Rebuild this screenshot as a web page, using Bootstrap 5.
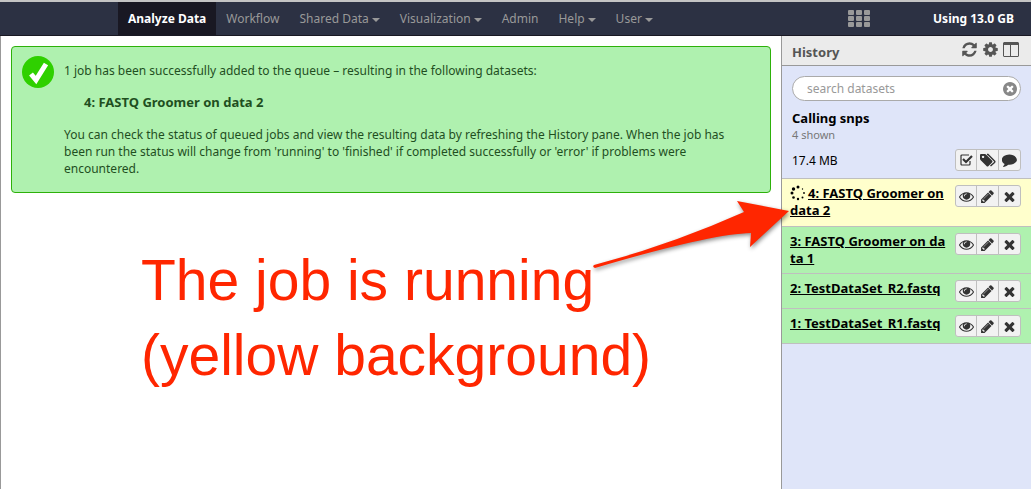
<!DOCTYPE html>
<html lang="en">
<head>
<meta charset="utf-8">
<meta name="viewport" content="width=device-width, initial-scale=1">
<title>Galaxy</title>
<link href="https://cdn.jsdelivr.net/npm/bootstrap@5.3.0/dist/css/bootstrap.min.css" rel="stylesheet">
<style>
body { font-family: "Noto Sans", "Open Sans", sans-serif; font-size: 12px; line-height: 17px; color: #000; background: #fff; }
.masthead { background: #2c3143; border-top: 2px solid #c4c4c4; border-bottom: 1px solid #191823; height: 36px; }
.masthead .nav-link { padding: 0 10px; line-height: 33px; color: #999; font-size: 12px; }
.masthead .nav-link.active { background: #191823; color: #fff; font-weight: 700; }
.masthead .dropdown-toggle::after { border-top: 4px solid; border-right: 4px solid transparent; border-left: 4px solid transparent; margin-left: 3px; vertical-align: 1px; }
.main-menu { margin-left: 118px; }
.apps-btn { margin-right: 63px; }
.quota { margin-right: 17px; color: #fff; }
.shell { min-height: calc(100vh - 36px); }
.center-pane { border-left: 1px solid #999; padding: 10px; min-width: 0; }
.done-box { background: #aff1af; border: 1px solid #2db10a; border-radius: 4px; color: #1f4f1f; padding: 9px 19px 15px 10px; gap: 10px; }
.done-box p { margin: 0 0 15px; }
.done-text { padding-top: 6px; }
.done-text .out-name { margin-left: 20px; font-weight: 700; font-size: 13px; }
.callout-text { font-family: "Liberation Sans", Arial, sans-serif; font-size: 57px; line-height: 75px; color: #ff2600; margin: 50px 0 0 130px; }
.history-pane { width: 250px; background: #dfe5f9; border-left: 1px solid #999; }
.pane-head { background: #ebebeb; border-bottom: 1px solid #999; height: 30px; padding: 0 12px 2px 10px; color: #444; }
.pane-head h1 { font-size: 13px; font-weight: 700; color: #555; margin: 6px 0 0; }
.icon-link-btn { color: #555; }
.search-wrap { height: 25px; background: #fff; border: 1px solid #aaa; border-radius: 13px; padding: 0 3px 0 14px; }
.search-wrap input { font-size: 12px; min-width: 0; color: #000; outline: 0; }
.search-wrap input::placeholder { color: #999; opacity: 1; }
.search-wrap button { color: #888; }
.history-info { padding: 10px 10px 7px; }
.history-info h2 { font-size: 13px; line-height: 17px; font-weight: 700; margin: 9px 0 0; }
.shown { color: #777; font-size: 11px; line-height: 16px; }
.size-row { margin-top: 6px; }
.tool-group .btn { width: 22px; height: 22px; padding: 0; border: 1px solid #bfbfbf; background: #f2f2f2; color: #333; border-radius: 3px; display: flex; align-items: center; justify-content: center; flex: none; }
.tool-group .btn + .btn { width: 23px; }
.dataset { border-top: 1px solid #bfbfbf; background: #aff1af; padding: 6px 10px 5px 8px; min-height: 35px; }
.dataset a { color: #000; font-weight: 700; font-size: 13px; text-decoration: underline; }
.dataset-list { border-bottom: 1px solid #bfbfbf; }
.dataset.tall { min-height: 47px; }
.dataset.running { background: #ffffcc; min-height: 48px; }
.pointer-arrow { left: -192px; top: 163px; pointer-events: none; filter: drop-shadow(1px 2px 2px rgba(0,0,0,.45)); }
svg { display: block; fill: currentColor; }
.spin { display: inline-block; vertical-align: -3px; margin-right: 2px; }
</style>
</head>
<body>
<svg width="0" height="0" class="position-absolute" aria-hidden="true">
<symbol id="eye" viewBox="0 0 1792 1792"><path d="M1664 960q-152-236-381-353 61 104 61 225 0 185-131.500 316.500t-316.500 131.500-316.500-131.500-131.500-316.500q0-121 61-225-229 117-381 353 133 205 333.500 326.500t434.500 121.500 434.500-121.500 333.500-326.500zM944 576q0-20-14-34t-34-14q-125 0-214.500 89.500t-89.500 214.500q0 20 14 34t34 14 34-14 14-34q0-86 61-147t147-61q20 0 34-14t14-34zM1792 960q0 34-20 69-140 230-376.500 368.500t-499.500 138.500-499.500-139-376.500-368q-20-35-20-69t20-69q140-229 376.500-368t499.500-139 499.500 139 376.500 368q20 35 20 69z"/></symbol>
<symbol id="pencil" viewBox="0 0 1792 1792"><path d="M491 1536l91-91-235-235-91 91v107h128v128h107zM1014 608q0-22-22-22-10 0-17 7l-542 542q-7 7-7 17 0 22 22 22 10 0 17-7l542-542q7-7 7-17zM960 416l416 416-832 832h-416v-416zM1643 512q0 53-37 90l-166 166-416-416 166-165q36-38 90-38 53 0 91 38l235 234q37 39 37 91z"/></symbol>
<symbol id="times" viewBox="0 0 1792 1792"><path d="M1490 1322q0 40-28 68l-136 136q-28 28-68 28t-68-28l-294-294-294 294q-28 28-68 28t-68-28l-136-136q-28-28-28-68t28-68l294-294-294-294q-28-28-28-68t28-68l136-136q28-28 68-28t68 28l294 294 294-294q28-28 68-28t68 28l136 136q28 28 28 68t-28 68l-294 294 294 294q28 28 28 68z"/></symbol>
</svg>

<header class="masthead d-flex align-items-center">
  <nav class="nav main-menu flex-nowrap text-nowrap" aria-label="Main">
    <a class="nav-link active" href="#">Analyze Data</a>
    <a class="nav-link" href="#">Workflow</a>
    <a class="nav-link dropdown-toggle" href="#">Shared Data</a>
    <a class="nav-link dropdown-toggle" href="#">Visualization</a>
    <a class="nav-link" href="#">Admin</a>
    <a class="nav-link dropdown-toggle" href="#">Help</a>
    <a class="nav-link dropdown-toggle" href="#">User</a>
  </nav>
  <button class="apps-btn btn p-0 border-0 ms-auto text-secondary" aria-label="Applications">
    <svg width="22" height="17" viewBox="0 0 22 17"><g fill="#999"><rect width="6" height="5" rx="1"/><rect x="8" width="6" height="5" rx="1"/><rect x="16" width="6" height="5" rx="1"/><rect y="6" width="6" height="5" rx="1"/><rect x="8" y="6" width="6" height="5" rx="1"/><rect x="16" y="6" width="6" height="5" rx="1"/><rect y="12" width="6" height="5" rx="1"/><rect x="8" y="12" width="6" height="5" rx="1"/><rect x="16" y="12" width="6" height="5" rx="1"/></g></svg>
  </button>
  <strong class="quota text-nowrap">Using 13.0 GB</strong>
</header>

<div class="shell d-flex">
  <main class="center-pane flex-grow-1">
    <div class="done-box d-flex align-items-start" role="status">
      <svg class="flex-shrink-0" width="32" height="32" viewBox="0 0 32 32"><circle cx="16" cy="16" r="16" fill="#2fd000"/><path d="M9 18l5 6L24 8" fill="none" stroke="#fff" stroke-width="5"/></svg>
      <div class="done-text">
        <p>1 job has been successfully added to the queue – resulting in the following datasets:</p>
        <p class="out-name">4: FASTQ Groomer on data 2</p>
        <p class="mb-0">You can check the status of queued jobs and view the resulting data by refreshing the History pane. When the job has been run the status will change from 'running' to 'finished' if completed successfully or 'error' if problems were encountered.</p>
      </div>
    </div>
    <p class="callout-text">The job is running<br>(yellow background)</p>
  </main>

  <aside class="history-pane flex-shrink-0 position-relative">
    <div class="pane-head d-flex align-items-center justify-content-between">
      <h1>History</h1>
      <div class="d-flex gap-1 align-items-center">
        <button class="icon-link-btn btn p-0 border-0" aria-label="Refresh"><svg width="17" height="17" viewBox="0 0 1792 1792"><path d="M1639 1056q0 5-1 7-64 268-268 434.500t-478 166.500q-146 0-282.500-55t-243.500-157l-129 129q-19 19-45 19t-45-19-19-45v-448q0-26 19-45t45-19h448q26 0 45 19t19 45-19 45l-137 137q71 66 161 102t187 36q134 0 250-65t186-179q11-17 53-117 8-23 30-23h192q13 0 22.500 9.500t9.500 22.500zM1664 256v448q0 26-19 45t-45 19h-448q-26 0-45-19t-19-45 19-45l138-138q-148-137-349-137-134 0-250 65t-186 179q-11 17-53 117-8 23-30 23h-199q-13 0-22.500-9.500t-9.500-22.500v-7q65-268 270-434.500t480-166.500q146 0 284 55.500t245 156.500l130-129q19-19 45-19t45 19 19 45z"/></svg></button>
        <button class="icon-link-btn btn p-0 border-0" aria-label="History options"><svg width="17" height="17" viewBox="0 0 1792 1792"><path d="M1152 896q0-106-75-181t-181-75-181 75-75 181 75 181 181 75 181-75 75-181zM1664 787v222q0 12-8 23t-20 13l-185 28q-19 54-39 91 35 50 107 138 10 12 10 25t-9 23q-27 37-99 108t-94 71q-12 0-26-9l-138-108q-44 23-91 38-16 136-29 186-7 28-36 28h-222q-14 0-24.500-8.500t-11.500-21.500l-28-184q-49-16-90-37l-141 107q-10 9-25 9-14 0-25-11-126-114-165-168-7-10-7-23 0-12 8-23 15-21 51-66.500t54-70.500q-27-50-41-99l-183-27q-13-2-21-12.500t-8-23.500v-222q0-12 8-23t19-13l186-28q14-46 39-92-40-57-107-138-10-12-10-24 0-10 9-23 26-36 98.500-107.500t94.500-71.500q13 0 26 10l138 107q44-23 91-38 16-136 29-186 7-28 36-28h222q14 0 24.500 8.500t11.500 21.500l28 184q49 16 90 37l142-107q9-9 24-9 13 0 25 10 129 119 165 170 7 8 7 22 0 12-8 23-15 21-51 66.500t-54 70.500q26 50 41 98l183 28q13 2 21 12.500t8 23.500z"/></svg></button>
        <button class="icon-link-btn btn p-0 border-0" aria-label="View all histories"><svg width="16" height="15" viewBox="0 0 16 15"><path fill-rule="evenodd" d="M1 0h14l1 1v13l-1 1H1l-1-1V1zM1 3v11h6V3zm7 0v11h7V3z"/></svg></button>
      </div>
    </div>

    <div class="history-info">
      <div class="search-wrap d-flex align-items-center">
        <input class="border-0 bg-transparent p-0 flex-grow-1" type="text" placeholder="search datasets" aria-label="search datasets">
        <button class="btn p-0 border-0" aria-label="Clear search"><svg width="14" height="14" viewBox="128 128 1536 1536"><path d="M1277 1122q0-26-19-45l-181-181 181-181q19-19 19-45 0-27-19-46l-90-90q-19-19-46-19-26 0-45 19l-181 181-181-181q-19-19-45-19-27 0-46 19l-90 90q-19 19-19 46 0 26 19 45l181 181-181 181q-19 19-19 45 0 27 19 46l90 90q19 19 46 19 26 0 45-19l181-181 181 181q19 19 45 19 27 0 46-19l90-90q19-19 19-46zM1664 896q0 209-103 385.500t-279.500 279.500-385.500 103-385.500-103-279.500-279.500-103-385.500 103-385.500 279.500-279.500 385.500-103 385.500 103 279.500 279.500 103 385.500z"/></svg></button>
      </div>
      <h2>Calling snps</h2>
      <div class="shown">4 shown</div>
      <div class="size-row d-flex justify-content-between align-items-center">
        <span>17.4 MB</span>
        <div class="btn-group tool-group">
          <button class="btn" aria-label="Select datasets"><svg width="14" height="14" viewBox="0 0 14 14"><path d="M11 8v3q0 1-1 1H3q-1 0-1-1V3q0-1 1-1h7" fill="none" stroke="currentColor" stroke-width="1.200"/><path d="M4 6l3 3 6-6" fill="none" stroke="currentColor" stroke-width="2.200"/></svg></button>
          <button class="btn" aria-label="Edit tags"><svg width="16" height="14" viewBox="0 0 16 14"><path fill-rule="evenodd" d="M0 2q0-1 1-1h4l1 .5 6 6q1 1 0 2l-3.500 3.500q-1 1-2 0L.5 7 0 6zm3 .7a1.200 1.200 0 1 0 .1 0z"/><path d="M7 1.500h1l6.500 6.500q.7.700 0 1.400L10.500 13" fill="none" stroke="currentColor" stroke-width="1.400"/></svg></button>
          <button class="btn" aria-label="Edit annotation"><svg width="15" height="15" viewBox="0 128 1792 1792"><path d="M1792 896q0 174-120 321.500t-326 233-450 85.500q-70 0-145-8-198 175-460 242-49 14-114 22-17 2-30.500-9t-17.500-29q-5-15 10-32l50-58q68-75 125-218-157-89-247.500-220t-90.500-281q0-130 71-248.500t191-204.500 286-136.500 348-50.500q244 0 450 85.500t326 233 120 321.500z"/></svg></button>
        </div>
      </div>
    </div>

    <div class="dataset-list">
      <div class="dataset running d-flex justify-content-between align-items-start">
        <div class="text-nowrap"><svg class="spin" width="16" height="16" viewBox="0 0 16 16" aria-hidden="true"><circle cx="8" cy="2" r="1.500"/><circle cx="3.500" cy="4" r="1.700"/><circle cx="2" cy="8" r="1.500"/><circle cx="3.500" cy="12.500" r="1.300"/><circle cx="8" cy="14" r="1.200"/><circle cx="12.500" cy="12.500" r="1"/><circle cx="14" cy="8" r=".9"/><circle cx="12.500" cy="4" r=".7"/></svg><a href="#">4: FASTQ Groomer on<br>data 2</a></div>
        <div class="btn-group tool-group"><button class="btn" aria-label="View data"><svg width="15" height="15"><use href="#eye"/></svg></button><button class="btn" aria-label="Edit attributes"><svg width="15" height="15"><use href="#pencil"/></svg></button><button class="btn" aria-label="Delete"><svg width="15" height="15"><use href="#times"/></svg></button></div>
      </div>
      <div class="dataset tall d-flex justify-content-between align-items-start">
        <div class="text-nowrap"><a href="#">3: FASTQ Groomer on da<br>ta 1</a></div>
        <div class="btn-group tool-group"><button class="btn" aria-label="View data"><svg width="15" height="15"><use href="#eye"/></svg></button><button class="btn" aria-label="Edit attributes"><svg width="15" height="15"><use href="#pencil"/></svg></button><button class="btn" aria-label="Delete"><svg width="15" height="15"><use href="#times"/></svg></button></div>
      </div>
      <div class="dataset d-flex justify-content-between align-items-start">
        <div class="text-nowrap"><a href="#">2: TestDataSet_R2.fastq</a></div>
        <div class="btn-group tool-group"><button class="btn" aria-label="View data"><svg width="15" height="15"><use href="#eye"/></svg></button><button class="btn" aria-label="Edit attributes"><svg width="15" height="15"><use href="#pencil"/></svg></button><button class="btn" aria-label="Delete"><svg width="15" height="15"><use href="#times"/></svg></button></div>
      </div>
      <div class="dataset d-flex justify-content-between align-items-start">
        <div class="text-nowrap"><a href="#">1: TestDataSet_R1.fastq</a></div>
        <div class="btn-group tool-group"><button class="btn" aria-label="View data"><svg width="15" height="15"><use href="#eye"/></svg></button><button class="btn" aria-label="Edit attributes"><svg width="15" height="15"><use href="#pencil"/></svg></button><button class="btn" aria-label="Delete"><svg width="15" height="15"><use href="#times"/></svg></button></div>
      </div>
    </div>

    <svg class="pointer-arrow position-absolute" width="204" height="72" viewBox="590 199 204 72" aria-hidden="true"><path fill="#ff2600" d="M594 265Q670 245 744 212L737 201L789 211L750 247L751 233Q710 234 595 268Q592 267 594 265z"/></svg>
  </aside>
</div>
<script src="https://cdn.jsdelivr.net/npm/bootstrap@5.3.0/dist/js/bootstrap.bundle.min.js"></script>
</body>
</html>
